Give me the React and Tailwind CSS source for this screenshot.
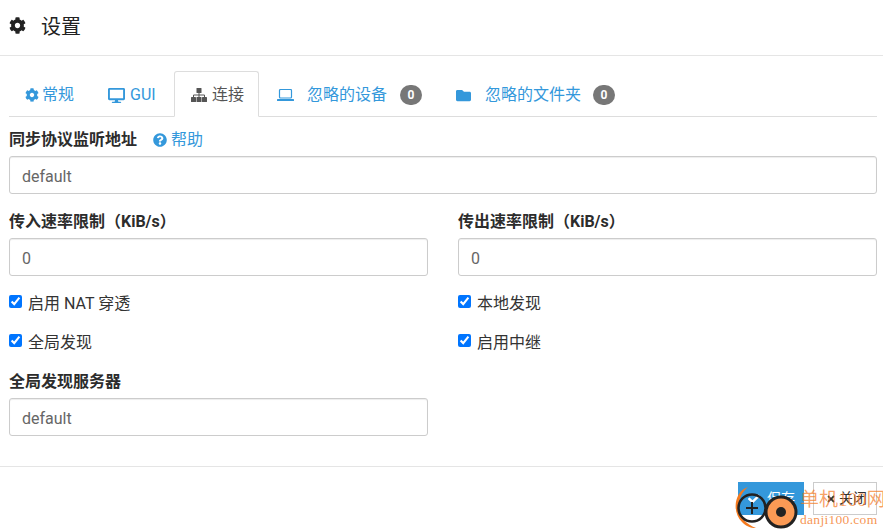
import React from 'react';
import { FaCog, FaDesktop, FaFolder, FaQuestionCircle, FaCheck, FaTimes } from 'react-icons/fa';

const LaptopIcon = () => (
  <svg width="17" height="12" viewBox="0 0 17 12" fill="none" className="shrink-0">
    <rect x="2.5" y="0.5" width="12" height="8.5" rx="1" stroke="#3498db" strokeWidth="1.2" />
    <rect x="0" y="10" width="17" height="2" rx="0.6" fill="#3498db" />
  </svg>
);

const SitemapIcon = () => (
  <svg width="16" height="14" viewBox="0 0 16 14" fill="#555555" className="shrink-0 mr-[5px]">
    <rect x="5.5" y="0" width="5" height="5" rx="0.6" />
    <rect x="0" y="9" width="5" height="5" rx="0.6" />
    <rect x="5.5" y="9" width="5" height="5" rx="0.6" />
    <rect x="11" y="9" width="5" height="5" rx="0.6" />
    <path d="M8 5v4M2.5 9V7h11v2" fill="none" stroke="#555555" strokeWidth="1" />
  </svg>
);

const Badge = ({ children }) => (
  <span className="w-[22px] h-[20px] rounded-full bg-[#777777] text-white text-[12px] font-bold flex items-center justify-center">
    {children}
  </span>
);

const Tab = ({ icon, label, active, className = '' }) => (
  <div
    className={`h-[46px] pt-[2px] flex items-center text-[16px] ${
      active
        ? 'bg-white border border-[#dddddd] border-b-white rounded-t-[3px] text-[#555555] -mb-px'
        : 'text-[#3498db]'
    } ${className}`}
  >
    {icon}
    {label}
  </div>
);

const Field = ({ label, value, help }) => (
  <div>
    <div className="h-[17px] flex items-center text-[16px] font-bold text-[#2c2c2c] mb-[8px]">
      {label}
      {help && (
        <span className="ml-[16px] flex items-center font-normal text-[#3498db]">
          <FaQuestionCircle className="w-[14px] h-[14px] mr-[4px]" />
          帮助
        </span>
      )}
    </div>
    <div className="h-[38px] pt-[3px] border border-[#cccccc] rounded-[3px] shadow-[inset_0_1px_1px_rgba(0,0,0,0.075)] flex items-center px-[12px] text-[16px] text-[#666666]">
      {value}
    </div>
  </div>
);

const Check = ({ label }) => (
  <label className="h-[20px] flex items-center text-[16px] text-[#333333]">
    <input type="checkbox" defaultChecked className="w-[13px] h-[13px] mr-[6px] accent-[#0075ff] -mt-[5px]" />
    {label}
  </label>
);

export default function App() {
  return (
    <div className="w-[883px] h-[530px] relative overflow-hidden bg-white font-['Roboto','Noto_Sans_CJK_SC',sans-serif]">
      <div className="h-[56px] pb-[2px] border-b border-[#e5e5e5] flex items-center pl-[9px] text-[20px] text-[#222222]">
        <FaCog className="w-[17px] h-[17px] mr-[15px] -mt-[3px]" />
        设置
      </div>

      <div className="mx-[9px] mr-[6px] mt-[15px] h-[46px] flex border-b border-[#dddddd]">
        <Tab className="pl-[16px] w-[85px]" icon={<FaCog className="w-[14px] h-[14px] mr-[3px]" />} label="常规" />
        <Tab className="pl-[14px] w-[80px]" icon={<FaDesktop className="w-[17px] h-[17px] mr-[5px]" />} label="GUI" />
        <Tab active className="pl-[16px] w-[85px]" icon={<SitemapIcon />} label="连接" />
        <Tab className="pl-[18px] w-[181px]" icon={<><LaptopIcon /><span className="w-[13px]" /></>} label={<>忽略的设备<span className="ml-[13px]"><Badge>0</Badge></span></>} />
        <Tab className="pl-[16px]" icon={<FaFolder className="w-[15px] h-[15px] mr-[14px]" />} label={<>忽略的文件夹<span className="ml-[12px]"><Badge>0</Badge></span></>} />
      </div>

      <div className="pl-[9px] pr-[6px] pt-[14px]">
        <Field label="同步协议监听地址" value="default" help />
        <div className="grid grid-cols-2 gap-x-[30px] mt-[19px]">
          <Field label="传入速率限制（KiB/s）" value="0" />
          <Field label="传出速率限制（KiB/s）" value="0" />
        </div>
        <div className="grid grid-cols-2 gap-x-[30px] gap-y-[19px] mt-[18px]">
          <Check label="启用 NAT 穿透" />
          <Check label="本地发现" />
          <Check label="全局发现" />
          <Check label="启用中继" />
        </div>
        <div className="w-[419px] mt-[20px]">
          <Field label="全局发现服务器" value="default" />
        </div>
      </div>

      <div className="mt-[30px] border-t border-[#e5e5e5] pt-[15px] pr-[6px] flex justify-end gap-[9px] text-[14px]">
        <div className="w-[66px] h-[33px] bg-[#3498db] text-white flex items-center pl-[10px]">
          <FaCheck className="w-[12px] h-[12px] mr-[7px]" />
          保存
        </div>
        <div className="w-[64px] h-[33px] border border-[#cccccc] text-[#333333] flex items-center pl-[12px]">
          <FaTimes className="w-[10px] h-[10px] mr-[3px]" />
          关闭
        </div>
      </div>

      {/* watermark */}
      <svg width="72" height="48" viewBox="0 0 72 48" className="absolute left-[732px] top-[484px]">
        <path d="M16 3 C3 7 -1 27 10 38 C14 42 18 44 24 44 C14 40 8 34 7 25 C6 15 10 8 16 3Z" fill="#f47a1f" />
        <circle cx="20" cy="24" r="13.5" fill="none" stroke="#222222" strokeWidth="2.5" />
        <path d="M14 24h12M20 18v12" stroke="#222222" strokeWidth="2" />
        <circle cx="49" cy="28" r="15" fill="#fb9a55" stroke="#222222" strokeWidth="3" />
        <circle cx="49" cy="28" r="5" fill="#222222" />
      </svg>
      <div className="absolute left-[800px] top-[488px] text-[19px] leading-[24px] text-[#f47a1f]/70 font-['Liberation_Serif','Noto_Sans_CJK_SC',serif] whitespace-nowrap">
        单机100网
      </div>
      <div className="absolute left-[800px] top-[512px] text-[13.5px] leading-[16px] tracking-[0.3px] text-[#f47a1f]/80 font-['Liberation_Serif',serif] whitespace-nowrap">
        danji100.com
      </div>
    </div>
  );
}
